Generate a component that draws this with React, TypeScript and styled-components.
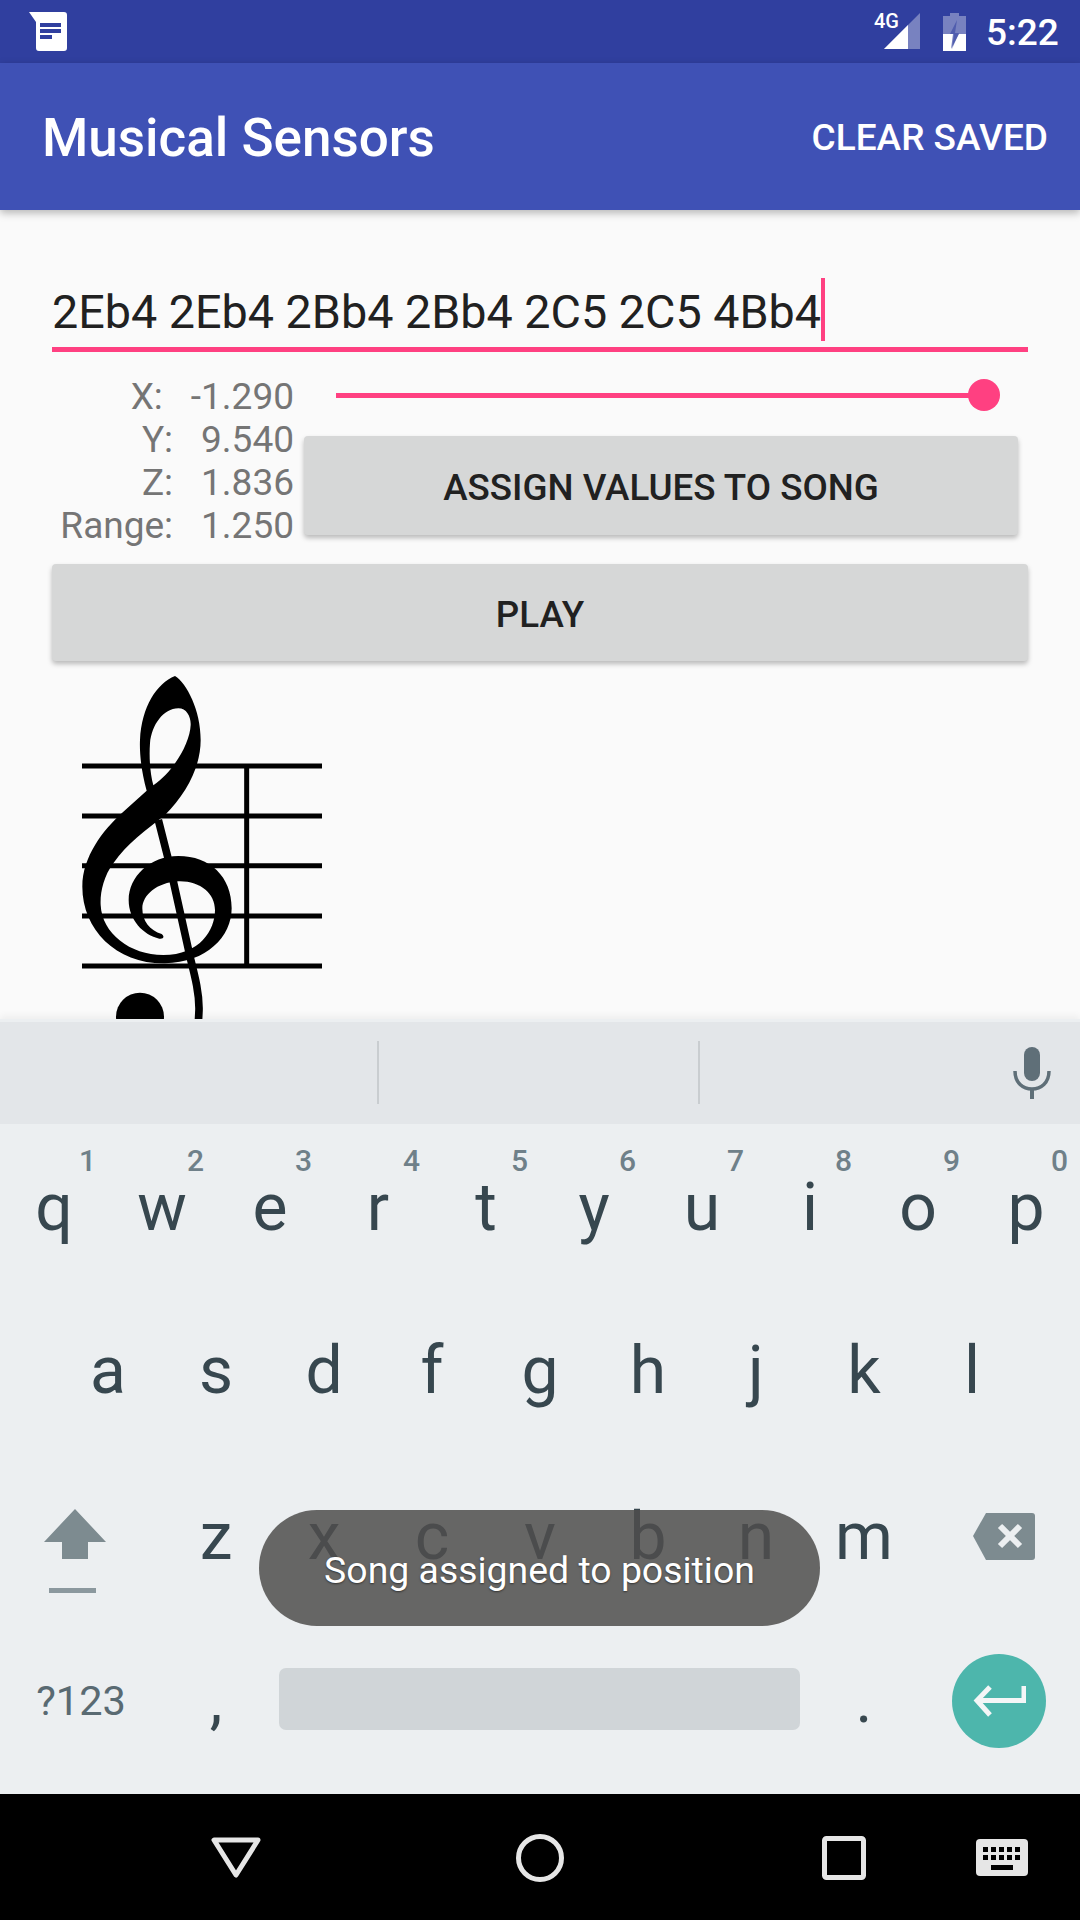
import React from "react";
import styled, { createGlobalStyle } from "styled-components";

const Global = createGlobalStyle`
  html, body { margin: 0; padding: 0; background: #fafafa; }
  #root { width: 1080px; height: 1920px; }
  * { box-sizing: border-box; }
`;

const Screen = styled.div`
  position: relative;
  width: 1080px;
  height: 1920px;
  display: flex;
  flex-direction: column;
  overflow: hidden;
  background: #fafafa;
  font-family: Roboto, "Liberation Sans", sans-serif;
`;

const StatusBar = styled.div`
  height: 63px;
  flex: none;
  background: #303f9f;
  display: flex;
  align-items: center;
  padding: 0 22px 0 29px;
  color: #fff;
`;
const StatusSpacer = styled.div`flex: 1;`;
const NoteIcon = styled.svg`width: 38px; height: 40px; margin-top: -1px;`;
const SignalIcon = styled.svg`width: 48px; height: 38px; margin-right: 22px; margin-top: -1px;`;
const BatteryIcon = styled.svg`width: 23px; height: 38px; margin-right: 20px;`;
const Clock = styled.div`font-size: 37px; font-weight: 500; line-height: 63px; width: 72px; padding-top: 1px;`;

const AppBar = styled.header`
  height: 147px;
  flex: none;
  background: #3f51b5;
  display: flex;
  align-items: center;
  justify-content: space-between;
  padding: 0 32px 0 42px;
  color: #fff;
  box-shadow: 0 3px 8px rgba(0, 0, 0, 0.28);
  position: relative;
  z-index: 1;
`;
const Title = styled.h1`
  margin: 2px 0 0;
  font-size: 53px;
  font-weight: 500;
`;
const Action = styled.div`
  font-size: 37px;
  font-weight: 500;
  margin-top: 1px;
`;

const Main = styled.main`
  height: 809px;
  flex: none;
  padding: 68px 52px 0;
  overflow: hidden;
`;
const EditField = styled.div`
  height: 74px;
  border-bottom: 5px solid #ff4081;
  display: flex;
  align-items: flex-start;
  font-size: 46.7px;
  line-height: 56px;
  color: #212121;
`;
const EditText = styled.span`
  padding-top: 6px;
`;
const Cursor = styled.span`
  width: 4px;
  height: 63px;
  background: #ff4081;
`;
const Sensors = styled.section`
  display: flex;
  align-items: flex-start;
  margin-top: 16px;
`;
const Readouts = styled.div`
  width: 242px;
  flex: none;
  padding-top: 7px;
`;
const Readout = styled.div`
  display: flex;
  justify-content: flex-end;
  gap: 28px;
  font-size: 37px;
  line-height: 43px;
  height: 43px;
  color: #757575;
`;
const Controls = styled.div`
  flex: 1;
  display: flex;
  flex-direction: column;
  padding-left: 10px;
`;
const SliderTrack = styled.div`
  height: 32px;
  margin: 11px 28px 0 32px;
  position: relative;
  display: flex;
  align-items: center;
`;
const SliderLine = styled.div`
  flex: 1;
  height: 5px;
  background: #ff4081;
`;
const SliderThumb = styled.div`
  width: 32px;
  height: 32px;
  border-radius: 50%;
  background: #ff4081;
  margin-left: -16px;
`;
const RaisedButton = styled.div<{ $h: number; $mr?: number }>`
  height: ${(p) => p.$h}px;
  margin-right: ${(p) => p.$mr ?? 0}px;
  padding-top: 4px;
  background: #d6d7d7;
  border-radius: 4px;
  box-shadow: 0 3px 5px rgba(0, 0, 0, 0.26);
  display: flex;
  align-items: center;
  justify-content: center;
  font-size: 36.75px;
  font-weight: 500;
  color: #212121;
`;
const AssignWrap = styled.div`margin-top: 25px;`;
const PlayWrap = styled.div`margin-top: 17px;`;
const ClefSvg = styled.svg`
  display: block;
  width: 300px;
  height: 380px;
  margin: -1px 0 0 -2px;
`;

const Keyboard = styled.div`
  flex: 1;
  display: flex;
  flex-direction: column;
  background: #eceff1;
  border-top: 3px solid #eceff1;
  box-shadow: 0 -3px 7px rgba(0, 0, 0, 0.05);
  position: relative;
`;
const Suggestions = styled.div`
  height: 102px;
  flex: none;
  background: #e3e6e9;
  display: flex;
  align-items: center;
  margin-bottom: 3px;
`;
const SuggestCell = styled.div<{ $w: number }>`
  width: ${(p) => p.$w}px;
  height: 63px;
  margin-top: -2px;
  border-right: 2px solid #c9cdd0;
`;
const MicIcon = styled.svg`
  width: 38px;
  height: 52px;
  margin-left: 313px;
  margin-top: 0;
`;
const KeyRow = styled.div<{ $h: number; $pad?: number }>`
  height: ${(p) => p.$h}px;
  flex: none;
  display: flex;
  padding: 0 ${(p) => p.$pad ?? 0}px;
`;
const LetterKey = styled.div`
  position: relative;
  width: 108px;
  flex: none;
  text-align: center;
  font-size: 66px;
  line-height: 80px;
  padding-top: 41px;
  color: #37474f;
`;
const Hint = styled.span`
  position: absolute;
  left: 79px;
  top: 17px;
  font-size: 30px;
  line-height: 34px;
  font-weight: 500;
  color: #6f8089;
`;
const SideKey = styled.div<{ $w: number }>`
  width: ${(p) => p.$w}px;
  flex: none;
  display: flex;
  align-items: center;
  justify-content: center;
  position: relative;
`;
const ShiftIcon = styled.svg`
  width: 66px;
  height: 90px;
  margin: 36px 13px 0 0;
`;
const BackIcon = styled.svg`
  width: 62px;
  height: 47px;
  margin: 0 0 0 9px;
`;
const SymbolsKey = styled.div`
  font-size: 41.5px;
  color: #596a72;
  margin: -10px 0 0 0;
`;
const PunctKey = styled.div`
  width: 108px;
  flex: none;
  text-align: center;
  font-size: 64px;
  line-height: 60px;
  padding-top: 55px;
  color: #37474f;
`;
const SpaceKey = styled.div`
  width: 540px;
  flex: none;
  padding: 52px 10px 0 9px;
`;
const SpaceBar = styled.div`
  height: 62px;
  background: #d0d5d8;
  border-radius: 7px;
`;
const EnterKey = styled.div`
  width: 94px;
  height: 94px;
  border-radius: 50%;
  background: #4db6ac;
  display: flex;
  align-items: center;
  justify-content: center;
  margin: -9px 0 0 -1px;
`;

const Toast = styled.div`
  position: absolute;
  left: 259px;
  top: 1510px;
  width: 561px;
  height: 116px;
  border-radius: 58px;
  background: rgba(79, 77, 76, 0.85);
  color: #fff;
  display: flex;
  align-items: center;
  justify-content: center;
  font-size: 37.4px;
  padding-top: 4px;
  text-shadow: 0 1px 2px rgba(0, 0, 0, 0.5);
`;

const NavBar = styled.nav`
  height: 126px;
  flex: none;
  background: #000;
  display: flex;
  align-items: center;
  padding-left: 211px;
`;
const NavIcon = styled.svg<{ $ml: number; $w: number; $h: number }>`
  width: ${(p) => p.$w}px;
  height: ${(p) => p.$h}px;
  margin-left: ${(p) => p.$ml}px;
  margin-top: 1px;
`;

const row1: [string, string][] = [
  ["q", "1"], ["w", "2"], ["e", "3"], ["r", "4"], ["t", "5"],
  ["y", "6"], ["u", "7"], ["i", "8"], ["o", "9"], ["p", "0"],
];

function Clef() {
  return (
    <ClefSvg viewBox="0 0 900 1140">
      <defs>
        <clipPath id="clefClip"><rect x="0" y="0" width="900" height="1077" /></clipPath>
      </defs>
      <g stroke="#000" strokeWidth="15">
        <line x1="96" x2="816" y1="318" y2="318" />
        <line x1="96" x2="816" y1="468" y2="468" />
        <line x1="96" x2="816" y1="617" y2="617" />
        <line x1="96" x2="816" y1="768" y2="768" />
        <line x1="96" x2="816" y1="918" y2="918" />
        <line x1="590" x2="590" y1="318" y2="918" />
      </g>
      <g clipPath="url(#clefClip)">
        <path
          fillRule="evenodd"
          d="M375 48 C410 70 452 150 452 240 C452 320 410 400 345 465 C290 510 230 550 190 610 C160 650 150 700 152 735 C156 820 240 885 340 885 C450 885 495 810 495 750 C495 700 450 662 385 664 C320 668 278 705 277 745 C277 785 300 812 335 822 C345 830 340 838 328 836 C280 825 236 780 236 720 C236 650 300 588 385 588 C480 588 545 650 545 745 C545 830 470 908 345 910 C200 912 97 810 97 680 C97 590 160 510 215 460 L290 392 C275 340 268 280 270 240 C275 140 320 70 375 48 Z M385 145 C410 145 423 170 422 195 C420 250 370 335 310 376 C300 340 297 290 300 250 C305 195 340 145 385 145 Z"
        />
        <path
          d="M325 480 L358 610 L420 890 C435 950 448 1000 447 1050 L445 1090"
          fill="none"
          stroke="#000"
          strokeWidth="23"
        />
        <circle cx="270" cy="1070" r="72" />
      </g>
    </ClefSvg>
  );
}

export default function App() {
  return (
    <Screen>
      <Global />
      <StatusBar>
        <NoteIcon viewBox="0 0 38 40">
          <path d="M0 1 H35 Q38 1 38 4 V37 Q38 40 35 40 H10 Q7 40 7 37 V11 Z" fill="#fff" />
          <path d="M11 12 H32 V16 H11 Z M11 18 H32 V22 H11 Z M11 24 H23 V28 H11 Z" fill="#303f9f" />
        </NoteIcon>
        <StatusSpacer />
        <SignalIcon viewBox="0 0 48 38">
          <path d="M47 1 V37 H11 Z" fill="#fff" opacity="0.35" />
          <path d="M35 13 V37 H11 Z" fill="#fff" />
          <text x="1" y="16" fontSize="20" fontWeight="500" fill="#fff" fontFamily="Roboto, sans-serif">4G</text>
        </SignalIcon>
        <BatteryIcon viewBox="0 0 23 38">
          <path d="M7 0 H16 V3 H23 V38 H0 V3 H7 Z" fill="#fff" opacity="0.35" />
          <path d="M0 21 H10 L8 36 L16 21 H23 V38 H0 Z" fill="#fff" />
          <path d="M14 7 L7 21 H11 L9 36 L16 20 H12 Z" fill="#303f9f" opacity="0.55" />
        </BatteryIcon>
        <Clock>5:22</Clock>
      </StatusBar>
      <AppBar>
        <Title>Musical Sensors</Title>
        <Action>CLEAR SAVED</Action>
      </AppBar>
      <Main>
        <EditField>
          <EditText>2Eb4 2Eb4 2Bb4 2Bb4 2C5 2C5 4Bb4</EditText>
          <Cursor />
        </EditField>
        <Sensors>
          <Readouts>
            <Readout><span>X:</span><span>-1.290</span></Readout>
            <Readout><span>Y:</span><span>9.540</span></Readout>
            <Readout><span>Z:</span><span>1.836</span></Readout>
            <Readout><span>Range:</span><span>1.250</span></Readout>
          </Readouts>
          <Controls>
            <SliderTrack>
              <SliderLine />
              <SliderThumb />
            </SliderTrack>
            <AssignWrap>
              <RaisedButton $h={99} $mr={10}>ASSIGN VALUES TO SONG</RaisedButton>
            </AssignWrap>
          </Controls>
        </Sensors>
        <PlayWrap>
          <RaisedButton $h={97}>PLAY</RaisedButton>
        </PlayWrap>
        <Clef />
      </Main>
      <Keyboard>
        <Suggestions>
          <SuggestCell $w={379} />
          <SuggestCell $w={321} />
          <MicIcon viewBox="0 0 38 52">
            <rect x="11" y="0" width="16" height="34" rx="8" fill="#5f6f78" />
            <path d="M2 24 C2 36 10 42 19 42 C28 42 36 36 36 24" fill="none" stroke="#5f6f78" strokeWidth="3.5" />
            <rect x="17" y="41" width="4" height="11" fill="#5f6f78" />
          </MicIcon>
        </Suggestions>
        <KeyRow $h={163}>
          {row1.map(([l, n]) => (
            <LetterKey key={l}>
              {l}
              <Hint>{n}</Hint>
            </LetterKey>
          ))}
        </KeyRow>
        <KeyRow $h={166} $pad={54}>
          {"asdfghjkl".split("").map((l) => (
            <LetterKey key={l}>{l}</LetterKey>
          ))}
        </KeyRow>
        <KeyRow $h={160}>
          <SideKey $w={162}>
            <ShiftIcon viewBox="0 0 66 90">
              <path d="M33 0 L64 33 H46 V50 H20 V33 H2 Z" fill="#7d8b90" />
              <rect x="7" y="79" width="47" height="5" fill="#8b989e" />
            </ShiftIcon>
          </SideKey>
          {"zxcvbnm".split("").map((l) => (
            <LetterKey key={l}>{l}</LetterKey>
          ))}
          <SideKey $w={162}>
            <BackIcon viewBox="0 0 62 47">
              <path d="M13 0 H59 Q62 0 62 3 V44 Q62 47 59 47 H13 L0 23 Z" fill="#7d8b90" />
              <path d="M27 13 L47 33 M47 13 L27 33" stroke="#eceff1" strokeWidth="6" />
            </BackIcon>
          </SideKey>
        </KeyRow>
        <KeyRow $h={178}>
          <SideKey $w={162}><SymbolsKey>?123</SymbolsKey></SideKey>
          <PunctKey>,</PunctKey>
          <SpaceKey><SpaceBar /></SpaceKey>
          <PunctKey>.</PunctKey>
          <SideKey $w={162}>
            <EnterKey>
              <svg width="54" height="32" viewBox="0 0 54 32">
                <path d="M52 1 V15.5 H6 M18 2 L5 15.5 L18 30" fill="none" stroke="#f4f6f7" strokeWidth="5" />
              </svg>
            </EnterKey>
          </SideKey>
        </KeyRow>
      </Keyboard>
      <NavBar>
        <NavIcon $ml={0} $w={50} $h={42} viewBox="0 0 50 42">
          <path d="M3 3 H47 L25 38 Z" fill="none" stroke="#e6e6e6" strokeWidth="5" strokeLinejoin="round" />
        </NavIcon>
        <NavIcon $ml={255} $w={48} $h={48} viewBox="0 0 48 48">
          <circle cx="24" cy="24" r="21.5" fill="none" stroke="#e6e6e6" strokeWidth="5" />
        </NavIcon>
        <NavIcon $ml={258} $w={44} $h={44} viewBox="0 0 44 44">
          <rect x="2.5" y="2.5" width="39" height="39" rx="2" fill="none" stroke="#e6e6e6" strokeWidth="5" />
        </NavIcon>
        <NavIcon $ml={110} $w={52} $h={37} viewBox="0 0 52 37">
          <rect width="52" height="37" rx="4" fill="#e6e6e6" />
          <path d="M7 8 h5 v5 h-5z M15 8 h5 v5 h-5z M23 8 h5 v5 h-5z M31 8 h5 v5 h-5z M39 8 h5 v5 h-5z M7 16 h5 v5 h-5z M15 16 h5 v5 h-5z M23 16 h5 v5 h-5z M31 16 h5 v5 h-5z M39 16 h5 v5 h-5z M15 26 h22 v5 h-22z" fill="#000" />
        </NavIcon>
      </NavBar>
      <Toast>Song assigned to position</Toast>
    </Screen>
  );
}
